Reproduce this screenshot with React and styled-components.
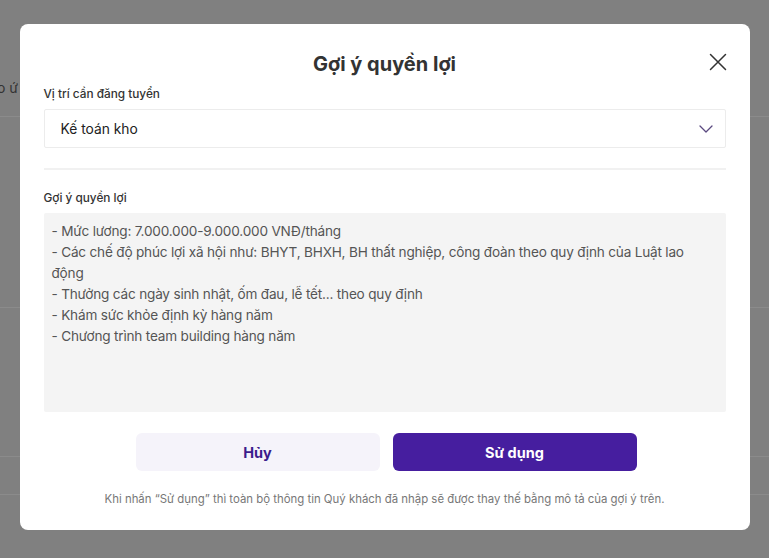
import React from "react";
import styled, { createGlobalStyle } from "styled-components";

const Global = createGlobalStyle`
  html, body { margin: 0; padding: 0; }
  body {
    background: #808080;
    font-family: Inter, "Noto Sans", sans-serif;
    overflow: hidden;
  }
  * { box-sizing: border-box; }
`;

const Page = styled.div`
  width: 769px;
  height: 558px;
  background: #808080;
  display: flex;
  flex-direction: column;
`;

const PageRow = styled.div`
  height: ${(p) => p.$h}px;
  border-bottom: 1px solid #8b8b8b;
  display: flex;
  align-items: flex-end;
  padding-bottom: ${(p) => p.$pb || 0}px;
  font-size: 14px;
  color: #333;
  padding-left: 0;
  margin-left: -3px;
`;

const Overlay = styled.div`
  position: fixed;
  inset: 0;
  display: flex;
  justify-content: center;
  align-items: flex-start;
  padding-top: 24px;
`;

const Modal = styled.div`
  position: relative;
  width: 730px;
  background: #fff;
  border-radius: 8px;
  padding: 28px 24px 23px;
  display: flex;
  flex-direction: column;
`;

const Title = styled.h2`
  margin: 0;
  text-align: center;
  font-size: 20px;
  line-height: 25px;
  font-weight: 700;
  color: #333;
`;

const Close = styled.button`
  position: absolute;
  top: 28px;
  right: 22px;
  width: 20px;
  height: 20px;
  padding: 0;
  border: none;
  background: none;
  display: flex;
  align-items: center;
  justify-content: center;
  cursor: pointer;
`;

const Label = styled.div`
  font-size: 11.8px;
  line-height: 18px;
  font-weight: 500;
  color: #333;
  margin-top: ${(p) => p.$mt}px;
`;

const Select = styled.div`
  margin-top: 6px;
  height: 39px;
  border: 1px solid #ececec;
  border-radius: 2px;
  display: flex;
  align-items: center;
  justify-content: space-between;
  padding: 0 12px 0 16px;
  font-size: 13.8px;
  color: #222;
`;

const Divider = styled.div`
  margin-top: 20px;
  height: 2px;
  background: #f1f1f1;
`;

const TextBox = styled.div`
  margin-top: 6px;
  height: 199px;
  background: #f4f4f4;
  border-radius: 2px;
  padding: 8px 8px;
  font-size: 13.6px;
  letter-spacing: -0.2px;
  line-height: 21px;
  color: #555;
  white-space: pre-wrap;
`;

const Actions = styled.div`
  margin-top: 21px;
  padding-left: 3px;
  display: flex;
  justify-content: center;
  gap: 13px;
`;

const Button = styled.button`
  width: 244px;
  height: 38px;
  border: none;
  border-radius: 6px;
  font-family: inherit;
  font-size: 14.5px;
  font-weight: 700;
  background: ${(p) => (p.$primary ? "#461e9f" : "#f5f3fa")};
  color: ${(p) => (p.$primary ? "#fff" : "#3b1b8c")};
  cursor: pointer;
`;

const Note = styled.p`
  margin: 20px 0 0;
  text-align: center;
  font-size: 11.4px;
  line-height: 16px;
  color: #777;
`;

const content = `- Mức lương: 7.000.000-9.000.000 VNĐ/tháng
- Các chế độ phúc lợi xã hội như: BHYT, BHXH, BH thất nghiệp, công đoàn theo quy định của Luật lao động
- Thưởng các ngày sinh nhật, ốm đau, lễ tết... theo quy định
- Khám sức khỏe định kỳ hàng năm
- Chương trình team building hàng năm`;

export default function App() {
  return (
    <>
      <Global />
      <Page>
        <PageRow $h={117} $pb={20}>o ứ</PageRow>
        <PageRow $h={191} />
        <PageRow $h={149} />
        <PageRow $h={38} />
      </Page>
      <Overlay>
        <Modal>
          <Title>Gợi ý quyền lợi</Title>
          <Close aria-label="Đóng">
            <svg width="18" height="18" viewBox="0 0 18 18" fill="none">
              <path d="M1.5 1.5L16.5 16.5M16.5 1.5L1.5 16.5" stroke="#333" strokeWidth="1.5" strokeLinecap="round" />
            </svg>
          </Close>
          <Label $mt={8}>Vị trí cần đăng tuyển</Label>
          <Select>
            <span>Kế toán kho</span>
            <svg width="14" height="8" viewBox="0 0 14 8" fill="none">
              <path d="M1 1L7 7L13 1" stroke="#5b4a80" strokeWidth="1.3" strokeLinecap="round" strokeLinejoin="round" />
            </svg>
          </Select>
          <Divider />
          <Label $mt={19}>Gợi ý quyền lợi</Label>
          <TextBox>{content}</TextBox>
          <Actions>
            <Button>Hủy</Button>
            <Button $primary>Sử dụng</Button>
          </Actions>
          <Note>Khi nhấn “Sử dụng” thì toàn bộ thông tin Quý khách đã nhập sẽ được thay thế bằng mô tả của gợi ý trên.</Note>
        </Modal>
      </Overlay>
    </>
  );
}
